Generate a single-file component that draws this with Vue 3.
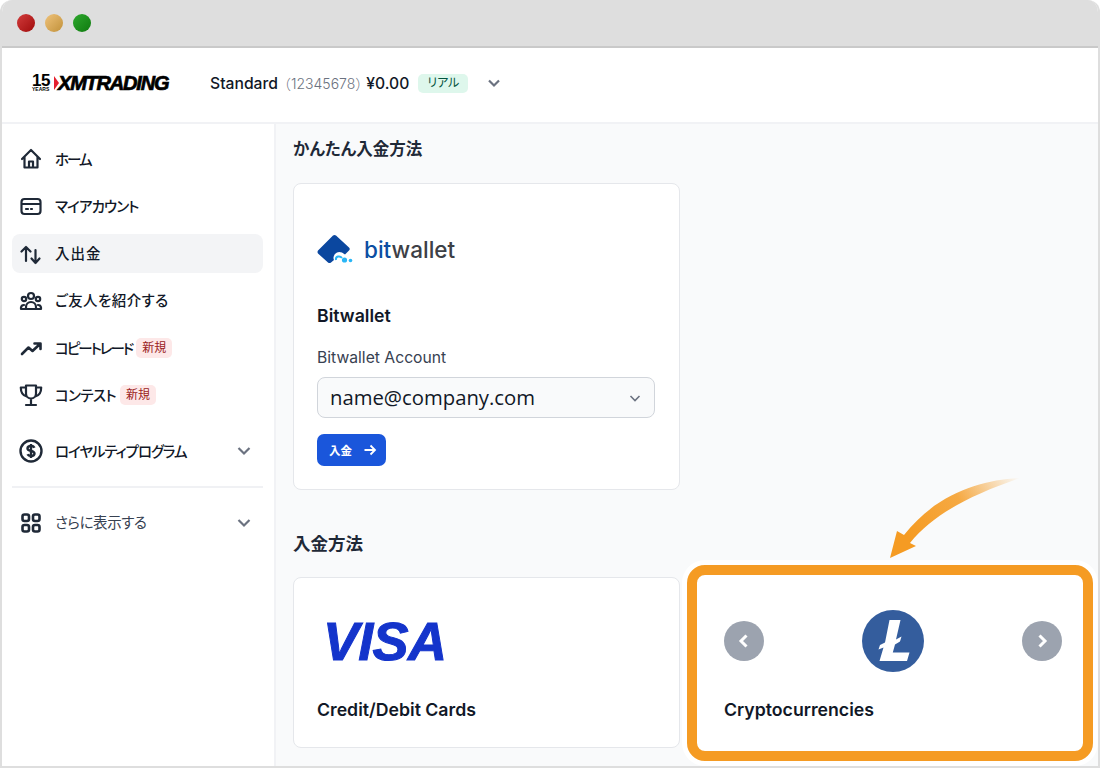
<script setup>
const accountNo = '12345678'

const navItems = [
  { label: 'ホーム', icon: 'home', tight: '-2px' },
  { label: 'マイアカウント', icon: 'card', tight: '-0.9px' },
  { label: '入出金', icon: 'swap', active: true, tight: '1px' },
  { label: 'ご友人を紹介する', icon: 'people', tight: '0.4px' },
  { label: 'コピートレード', icon: 'trend', isNew: true, tight: '-2px' },
  { label: 'コンテスト', icon: 'trophy', isNew: true, tight: '-0.6px' },
]
</script>

<template>
  <div class="window">
    <div class="titlebar">
      <span class="dot red"></span>
      <span class="dot amber"></span>
      <span class="dot green"></span>
    </div>

    <header class="topbar">
      <div class="logo">
        <div class="logo-years">
          <span class="logo-15">15</span>
          <span class="logo-small">YEARS</span>
        </div>
        <span class="logo-mark"></span>
        <span class="logo-name">XMTRADING</span>
      </div>
      <div class="account">
        <span class="account-type">Standard</span>
        <span class="account-no">（{{ accountNo }}）</span>
        <span class="account-balance">¥0.00</span>
        <span class="account-badge">リアル</span>
        <svg class="chev-top" width="16" height="16" viewBox="0 0 16 16"><path d="M3 5.500 8 10.500 13 5.500" fill="none" stroke="#6b7280" stroke-width="2.200"/></svg>
      </div>
    </header>

    <div class="body">
      <aside class="sidebar">
        <nav class="nav">
          <a v-for="item in navItems" :key="item.label" class="nav-item" :class="{ active: item.active }">
            <svg class="nav-icon" width="24" height="24" viewBox="0 0 24 24" fill="none" stroke="#1f2937" stroke-width="2.200" stroke-linecap="round" stroke-linejoin="round">
              <template v-if="item.icon === 'home'">
                <path d="M3 12 12 3l9 9M5.500 10v10.500h13V10M10 20.500v-6h4v6"/>
              </template>
              <template v-else-if="item.icon === 'card'">
                <rect x="2.500" y="5" width="19" height="15" rx="3"/>
                <path d="M3 10h18M7 15h2M12 15h1"/>
              </template>
              <template v-else-if="item.icon === 'swap'">
                <path d="M7 19V5M2.500 9.500 7 5l4.500 4.500M16.500 8v13M12.500 16.500 16.500 21l4-4.500"/>
              </template>
              <template v-else-if="item.icon === 'people'">
                <circle cx="12" cy="7" r="3"/>
                <circle cx="5" cy="10" r="2.200"/>
                <circle cx="19" cy="10" r="2.200"/>
                <path d="M7 20v-2a5 5 0 0 1 10 0v2zM2 20v-1.500A3 3 0 0 1 5 16M22 20v-1.500A3 3 0 0 0 19 16M2 20h20"/>
              </template>
              <template v-else-if="item.icon === 'trend'">
                <path d="M3 18 9.500 11.500l4 3.500L21 8M15.500 7.500H21.500V13" stroke-width="2.600"/>
              </template>
              <template v-else-if="item.icon === 'trophy'">
                <path d="M7 2.500h10v8a5 5 0 0 1-10 0zM7 4.500H1.800c0 5 1.700 8 6 9M17 4.500h5.200c0 5-1.700 8-6 9M12 15.500v6M7 22h10"/>
              </template>
            </svg>
            <span class="nav-label" :style="{ letterSpacing: item.tight }">{{ item.label }}</span>
            <span v-if="item.isNew" class="new-badge">新規</span>
          </a>

          <a class="nav-item loyalty">
            <svg class="nav-icon" width="24" height="24" viewBox="0 0 24 24" fill="none" stroke="#1f2937" stroke-width="2.400">
              <circle cx="12" cy="12" r="10.500"/>
              <path d="M15.500 8.800c-.6-1.200-2-1.800-3.500-1.800-2 0-3.500 1-3.500 2.500 0 3.500 7 1.500 7 5 0 1.500-1.500 2.500-3.500 2.500-1.500 0-2.900-.6-3.500-1.800M12 5v14"/>
            </svg>
            <span class="nav-label loyalty-label">ロイヤルティプログラム</span>
            <svg class="nav-chev" width="16" height="16" viewBox="0 0 16 16"><path d="M2.500 5 8 10.500 13.500 5" fill="none" stroke="#6b7280" stroke-width="2.200"/></svg>
          </a>

          <div class="nav-divider"></div>

          <a class="nav-item more">
            <svg class="nav-icon" width="24" height="24" viewBox="0 0 24 24" fill="none" stroke="#1f2937" stroke-width="2.600">
              <rect x="3.500" y="3.500" width="6.500" height="6.500" rx="2"/>
              <rect x="14" y="3.500" width="6.500" height="6.500" rx="2"/>
              <rect x="3.500" y="14" width="6.500" height="6.500" rx="2"/>
              <rect x="14" y="14" width="6.500" height="6.500" rx="2"/>
            </svg>
            <span class="nav-label plain">さらに表示する</span>
            <svg class="nav-chev" width="16" height="16" viewBox="0 0 16 16"><path d="M2.500 5 8 10.500 13.500 5" fill="none" stroke="#6b7280" stroke-width="2.200"/></svg>
          </a>
        </nav>
      </aside>

      <main class="main">
        <h2 class="section-title">かんたん入金方法</h2>
        <div class="grid">
          <section class="card bitwallet-card">
            <div class="bw-logo">
              <svg width="36" height="30" viewBox="0 0 36 30">
                <path d="M19 1.500 32 13.500 Q33.500 15 32 16.500 L28 20.500 Q22 16 18 20 Q15.500 23 17 26 L14 28.500 Q12.500 29.500 11 28.500 L1 19.500 Q0 18 1 16.500 L16 1.500 Q17.500 0.500 19 1.500Z" fill="#0b479f"/>
                <path d="M19 26 Q18.500 23 21 22.500 Q23.500 22 25 24" fill="none" stroke="#29b6f6" stroke-width="2"/>
                <circle cx="27.500" cy="26" r="2.600" fill="#29b6f6"/>
                <circle cx="33.500" cy="26.500" r="1.800" fill="#29b6f6"/>
              </svg>
              <span class="bw-name"><span class="bw-bit">bit</span>wallet</span>
            </div>
            <h3 class="card-title">Bitwallet</h3>
            <label class="field-label">Bitwallet Account</label>
            <div class="select">
              <span class="select-value">name@company.com</span>
              <svg width="14" height="14" viewBox="0 0 14 14"><path d="M2.500 5 7 9.500 11.500 5" fill="none" stroke="#6b7280" stroke-width="1.600"/></svg>
            </div>
            <button class="pay-btn" type="button">
              入金
              <svg width="14" height="14" viewBox="0 0 14 14"><path d="M1.500 7h10.500M7.500 2.500 12 7 7.500 11.500" fill="none" stroke="#fff" stroke-width="1.800"/></svg>
            </button>
          </section>
        </div>

        <h2 class="section-title second">入金方法</h2>
        <div class="grid">
          <section class="card method-card">
            <div class="method-logo">
              <span class="visa">VISA</span>
            </div>
            <h3 class="card-title method-title">Credit/Debit Cards</h3>
          </section>
          <section class="card method-card crypto-card">
            <div class="method-logo crypto">
              <span class="round-btn">
                <svg width="16" height="16" viewBox="0 0 16 16"><path d="M10.500 2.500 5 8l5.500 5.500" fill="none" stroke="#fff" stroke-width="3"/></svg>
              </span>
              <svg width="62" height="62" viewBox="0 0 62 62">
                <circle cx="31" cy="31" r="31" fill="#345d9d"/>
                <path d="M27.500 10H38.500L34 29.500 39.500 26.500 38 31.500 33 34.500 30.800 42.500H47.500L45 51H17.500L21.500 37.500 16.500 39.500 18 35 23 32.500Z" fill="#fff"/>
              </svg>
              <span class="round-btn">
                <svg width="16" height="16" viewBox="0 0 16 16"><path d="M5.500 2.500 11 8l-5.500 5.500" fill="none" stroke="#fff" stroke-width="3"/></svg>
              </span>
            </div>
            <h3 class="card-title method-title">Cryptocurrencies</h3>
          </section>
        </div>
      </main>
    </div>

    <!-- callout over the crypto card -->
    <div class="callout"></div>
    <svg class="callout-arrow" width="140" height="90" viewBox="0 0 140 90">
      <defs>
        <linearGradient id="arrowFade" x1="137" y1="4" x2="30" y2="70" gradientUnits="userSpaceOnUse">
          <stop offset="0" stop-color="#f59b23" stop-opacity="0"/>
          <stop offset="0.5" stop-color="#f59b23" stop-opacity="0.85"/>
          <stop offset="1" stop-color="#f59b23"/>
        </linearGradient>
      </defs>
      <path d="M137 4C100 6 55 18 21 61L14 57 7 84 33 72 27 69C50 40 90 20 137 4Z" fill="url(#arrowFade)"/>
    </svg>
  </div>
</template>

<style>
html, body {
  margin: 0;
  background: #fff;
}
</style>

<style scoped>
.window {
  position: relative;
  width: 1100px;
  height: 768px;
  box-sizing: border-box;
  display: flex;
  flex-direction: column;
  overflow: hidden;
  border: 2px solid #dedede;
  border-top: none;
  border-radius: 12px 12px 0 0;
  background: #fff;
  font-family: Inter, "Noto Sans CJK JP", sans-serif;
  font-feature-settings: "palt";
  color: #111827;
}
.titlebar {
  flex: none;
  height: 46px;
  margin: 0 -2px;
  padding-left: 17px;
  display: flex;
  align-items: center;
  gap: 10px;
  background: #dedede;
  border-bottom: 2px solid #c9c9c9;
}
.dot {
  width: 18px;
  height: 18px;
  border-radius: 50%;
}
.red { background: linear-gradient(135deg, #d23c3c, #a00c0c); }
.amber { background: linear-gradient(135deg, #efc27a, #c1913a); }
.green { background: linear-gradient(135deg, #2ea82e, #0f7a0f); }

.topbar {
  flex: none;
  height: 70px;
  padding-bottom: 4px;
  display: flex;
  align-items: center;
  border-bottom: 2px solid #f1f2f5;
  background: #fff;
}
.logo {
  width: 178px;
  margin-left: 30px;
  display: flex;
  align-items: center;
  color: #000;
  font-family: "Liberation Sans", sans-serif;
}
.logo-years {
  display: flex;
  flex-direction: column;
  width: 20px;
  line-height: 1;
}
.logo-15 {
  font-size: 17px;
  font-weight: 700;
  height: 13px;
  line-height: 13px;
  letter-spacing: -0.5px;
}
.logo-small {
  font-size: 5px;
  font-weight: 700;
}
.logo-mark {
  width: 0;
  height: 0;
  margin: 0 -1px 0 2px;
  border-left: 5px solid #e5202e;
  border-top: 7px solid transparent;
  border-bottom: 7px solid transparent;
}
.logo-name {
  font-size: 20px;
  font-weight: 700;
  font-style: italic;
  letter-spacing: -1.200px;
  -webkit-text-stroke: 0.7px #000;
}
.account {
  display: flex;
  align-items: center;
  font-size: 15.700px;
}
.account-type {
  font-weight: 500;
}
.account-no {
  margin: 0 -3px 0 -1px;
  color: #6b7280;
  font-size: 14px;
  font-weight: 300;
  font-feature-settings: normal;
}
.account-balance {
  font-weight: 500;
}
.account-badge {
  width: 50px;
  height: 19px;
  margin-left: 9px;
  border-radius: 5px;
  background: #def7ec;
  color: #03543f;
  font-size: 12px;
  line-height: 18px;
  text-align: center;
}
.chev-top {
  margin-left: 18px;
}

.body {
  flex: 1;
  min-height: 0;
  display: flex;
}
.sidebar {
  flex: none;
  box-sizing: border-box;
  width: 274px;
  padding: 15.500px 11px 0 10px;
  border-right: 2px solid #f1f2f5;
  background: #fff;
}
.nav {
  display: flex;
  flex-direction: column;
  gap: 8.250px;
}
.nav-item {
  display: flex;
  align-items: center;
  height: 39px;
  padding: 0 8px 0 7px;
  border-radius: 8px;
  font-size: 14.500px;
  font-weight: 500;
  color: #111827;
}
.nav-item.active {
  background: #f3f4f6;
}
.nav-icon {
  flex: none;
  margin-right: 12px;
}
.nav-label {
  margin-top: -2px;
}
.loyalty-label {
  letter-spacing: -1.100px;
}
.new-badge {
  margin-left: 4px;
  width: 36px;
  height: 20px;
  border-radius: 5px;
  background: #fde8e8;
  color: #9b1c1c;
  font-size: 12px;
  font-weight: 400;
  line-height: 20px;
  text-align: center;
}
.loyalty {
  margin-top: 8.500px;
}
.nav-chev {
  margin-left: auto;
  margin-right: 3px;
}
.nav-divider {
  height: 2px;
  margin: 7px 0;
  background: #f0f1f4;
}
.plain {
  font-weight: 400;
  color: #374151;
  letter-spacing: -0.45px;
}

.main {
  flex: 1;
  min-width: 0;
  box-sizing: border-box;
  padding: 13px 15px 0 17px;
  background: #f9fafb;
}
.section-title {
  margin: 0 0 22px;
  font-size: 16.500px;
  line-height: 24px;
  font-weight: 600;
  color: #1f2937;
}
.section-title.second {
  margin: 41.500px 0 21.500px;
  font-size: 17.500px;
}
.grid {
  display: grid;
  grid-template-columns: 387px 387px;
  gap: 16px;
}
.card {
  box-sizing: border-box;
  padding: 24px 24px 24px 23px;
  border: 1px solid #e5e7eb;
  border-radius: 8px;
  background: #fff;
}
.bitwallet-card {
  height: 307px;
}
.bw-logo {
  display: flex;
  align-items: center;
  gap: 11px;
  height: 30px;
  margin-top: 26px;
}
.bw-name {
  font-size: 22.500px;
  font-weight: 500;
  color: #3d4046;
}
.bw-bit {
  color: #0b4ea2;
}
.card-title {
  margin: 0;
  font-size: 17.700px;
  line-height: 24px;
  font-weight: 600;
  color: #111827;
}
.bitwallet-card .card-title {
  margin-top: 40px;
}
.field-label {
  display: block;
  margin-top: 20px;
  font-size: 15.700px;
  line-height: 20px;
  color: #374151;
}
.select {
  box-sizing: border-box;
  width: 338px;
  height: 41px;
  margin-top: 9px;
  padding: 0 12px;
  display: flex;
  align-items: center;
  justify-content: space-between;
  border: 1px solid #d1d5db;
  border-radius: 8px;
  background: #f9fafb;
  font-family: "Open Sans", sans-serif;
  font-size: 20.300px;
  color: #111827;
}
.select-value {
  margin-top: -2px;
}
.pay-btn {
  display: flex;
  align-items: center;
  gap: 11px;
  height: 32px;
  width: 69px;
  margin-top: 16px;
  padding: 0 0 0 12px;
  border: none;
  border-radius: 7px;
  background: #1a56db;
  color: #fff;
  font-family: inherit;
  font-size: 11.500px;
  font-weight: 700;
}
.method-card {
  height: 171px;
  padding-top: 23px;
}
.crypto-card {
  padding-left: 27px;
  padding-right: 20px;
}
.method-logo {
  height: 80px;
  display: flex;
  align-items: center;
}
.crypto {
  justify-content: space-between;
}
.visa {
  margin-left: 6px;
  font-family: "Liberation Sans", sans-serif;
  font-size: 54px;
  font-weight: 700;
  font-style: italic;
  letter-spacing: -0.7px;
  -webkit-text-stroke: 1px #1434cb;
  color: #1434cb;
}
.round-btn {
  width: 40px;
  height: 40px;
  display: flex;
  align-items: center;
  justify-content: center;
  border-radius: 50%;
  background: #9ca3af;
}
.method-title {
  margin-top: 17px;
}
.callout {
  position: absolute;
  left: 685px;
  top: 565px;
  width: 406px;
  height: 196px;
  box-sizing: border-box;
  border: 10px solid #f59b23;
  border-radius: 18px;
  box-shadow: 0 0 0 5px #fff, inset 0 0 0 6px #fff;
}
.callout-arrow {
  position: absolute;
  left: 881px;
  top: 474px;
}
</style>
